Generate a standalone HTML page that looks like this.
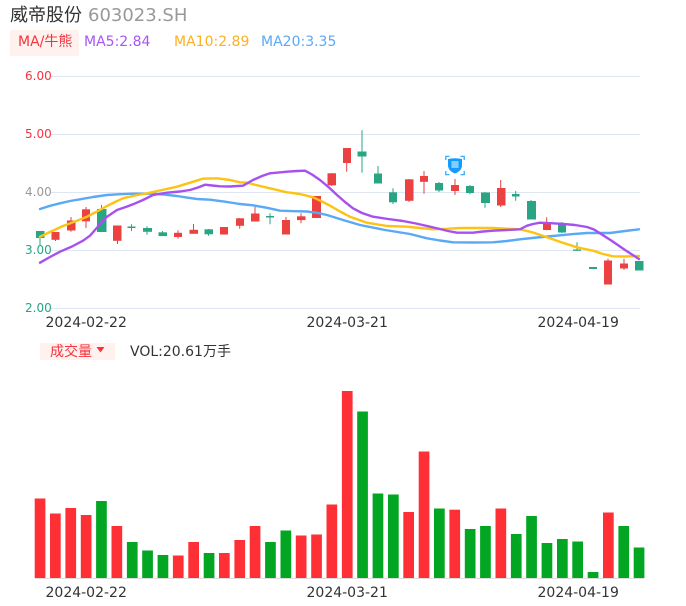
<!DOCTYPE html>
<html><head><meta charset="utf-8"><style>
html,body{margin:0;padding:0;background:#fff;width:686px;height:606px;overflow:hidden}
svg{position:absolute;left:0;top:0}
text{font-family:"DejaVu Sans","WenQuanYi Zen Hei",sans-serif}
</style></head><body>
<svg width="686" height="606" viewBox="0 0 686 606" xmlns="http://www.w3.org/2000/svg">
<text x="10" y="21" font-size="18" fill="#333">威帝股份</text>
<text x="88" y="21" font-size="18" fill="#999">603023.SH</text>
<rect x="10" y="30" width="69" height="26" fill="#fff2ee"/>
<text x="18" y="46" font-size="14" fill="#f5333f">MA/牛熊</text>
<text x="84" y="46" font-size="14" fill="#a855f7">MA5:2.84</text>
<text x="174" y="46" font-size="14" fill="#fdb022">MA10:2.89</text>
<text x="261" y="46" font-size="14" fill="#5aa9f8">MA20:3.35</text>

<g stroke="#e0e6f1" stroke-width="1">
<path d="M51 76.5H640M51 134.5H640M51 192.5H640M51 250.5H640M51 308.5H640"/>
</g>
<g font-size="12">
<text x="25" y="80" fill="#f5333f">6.00</text>
<text x="25" y="138" fill="#f5333f">5.00</text>
<text x="25" y="196" fill="#999">4.00</text>
<text x="25" y="254" fill="#26a485">3.00</text>
<text x="25" y="312" fill="#26a485">2.00</text>
</g>

<!-- green candles -->
<g fill="#2aa584" stroke="#2aa584" stroke-width="1">
<path d="M40 231V245M101.500 205V232M131.500 224.300V231M147 226.300V234.700M162.500 231V236M208.500 229V235.700M270 213.300V224.300M362 130.300V172.700M378 166V183M393 188.300V204M439 182V192M470 185V194.300M485 192V207.700M515.700 191V200.700M531 200V219.500M562 222V233M577 242.300V250.700"/>
<rect x="36.500" y="231.500" width="7.500" height="6" />
<rect x="97.500" y="209.500" width="8.500" height="22" />
<rect x="128" y="227" width="7" height="0.500" />
<rect x="143.500" y="228.500" width="8" height="2.800" />
<rect x="159" y="232.800" width="7.500" height="2.800" />
<rect x="205" y="229.800" width="7.500" height="4" />
<rect x="266.500" y="216.500" width="7" height="0.500" />
<rect x="358" y="152" width="8" height="4" />
<rect x="374.500" y="174" width="7" height="9" />
<rect x="389.500" y="192.800" width="7" height="9" />
<rect x="435.500" y="183.500" width="7" height="6.500" />
<rect x="466.500" y="186.500" width="7" height="6" />
<rect x="481.500" y="193" width="8" height="9.500" />
<rect x="512.500" y="194.500" width="6.500" height="1.500" />
<rect x="527.500" y="201.500" width="8" height="17.500" />
<rect x="558.500" y="224" width="7" height="8" />
<rect x="573.500" y="250" width="7" height="0.300" />
<rect x="589.500" y="267.500" width="7" height="1" />
<rect x="635.500" y="261.500" width="7.500" height="8.500" />
</g>
<!-- red candles -->
<g fill="#eb4141" stroke="#eb4141" stroke-width="1">
<path d="M55.500 232V241M71 217V231.700M86 207V228M117.500 226V244M178 230.300V238.700M193.500 224V233.300M224 227V234.700M239.700 218V228.700M255 206.700V221M286 217V234M301 213.300V223.300M331.700 173V186M346.700 148V171.700M409 179V202M424 171V193.700M455 179V195M500.700 180V207M546.700 217.300V230.300M608 258.700V284M624 258.700V270"/>
<rect x="52" y="232.500" width="7" height="6.800" />
<rect x="67.500" y="221" width="7.500" height="9" />
<rect x="82.500" y="209.800" width="7" height="11" />
<rect x="113.500" y="226" width="7.500" height="14.300" />
<rect x="174.500" y="233.300" width="7" height="3.200" />
<rect x="190" y="230.300" width="7.500" height="3" />
<rect x="220.500" y="227.500" width="7" height="6.500" />
<rect x="236.500" y="218.800" width="7" height="6.500" />
<rect x="251.500" y="214" width="7.500" height="7" />
<rect x="282.500" y="220.500" width="7" height="13.500" />
<rect x="297.500" y="216.800" width="7.500" height="2.800" />
<rect x="312.500" y="196.500" width="8" height="21" />
<rect x="328" y="173.800" width="7.500" height="11" />
<rect x="343.500" y="148.500" width="7" height="14" />
<rect x="405.500" y="179.800" width="7.500" height="20.500" />
<rect x="420.500" y="176.500" width="7" height="4.800" />
<rect x="451.500" y="185.500" width="7" height="5" />
<rect x="497.500" y="188.500" width="7.500" height="16.500" />
<rect x="543.500" y="224.500" width="7" height="5" />
<rect x="604.500" y="261" width="7" height="23" />
<rect x="620.500" y="264" width="7" height="4" />
</g>

<!-- MA lines -->
<g fill="none" stroke-width="2.400" stroke-linejoin="round" stroke-linecap="round">
<polyline stroke="#5aa9f5" points="40,209 50,205.800 60,203.300 70,201 80,199.300 93,197 107,195 120,194.200 133,193.700 153,193.700 165,194.700 177,196 187,197.600 197,199 210,199.700 225,201.700 240,204 253,205.300 267,207.800 280,210.700 295,211.200 307,211.500 317,212.800 327,215 343,220 360,225 385,230 410,234 427,238.300 440,240.500 453,242.300 473,242.500 493,242.300 507,241 520,239.300 537,237.500 553,236 570,234.300 587,233 610,233 625,231 639,229.300"/>
<polyline stroke="#fdc313" points="40,236.700 51,231.500 63,226 75,221.500 87,216.700 97,211.500 107,206 115,202 123,198.300 135,195.500 147,193.300 162,190 177,186.700 190,182.700 203,178.700 217,178.300 230,180 240,182.300 247,182.700 258,185.500 270,188.300 287,192.300 300,194 313,197.300 321,201 330,205.700 340,211.500 350,216.700 367,222.700 387,226 407,226.700 420,228 433,229.300 447,228.800 460,228 493,228 520,229.300 533,232.500 547,237.300 562,242.500 577,247.300 593,250.700 603,254 613,256.300 625,256.500 639,256"/>
<polyline stroke="#a750f0" points="40,262.700 50,257 60,251.700 72,246.500 83,240.700 90,235.700 95,230 101,223 107,216.700 117,210 125,207.300 133,204.300 143,200 153,195 167,192.700 180,191.500 190,190 198,187.500 205,184.700 212,185.500 220,186.300 230,186.500 243,185.700 253,180 262,176 270,173.300 287,171.700 297,171 305,170.700 312,174.500 320,180 329,187.500 337,195 345,202 353,208.300 362,213 373,216.700 388,219 403,221 416,223.500 430,226.700 440,229 448,231 457,232.700 473,232.700 483,231.500 493,230.700 507,230 520,229.300 527,225.700 533,224 540,222.700 560,223.700 575,225 587,227 594,229.500 600,233.300 612,241 625,250 639,259"/>
</g>

<!-- marker icon -->
<g>
<path d="M445.800 160V156.300H449.500M460.500 156.300H464.200V160M445.800 171V174.700H449.500M460.500 174.700H464.200V171" fill="none" stroke="#1ea7fd" stroke-width="1.200"/>
<path d="M448 159Q455 157.500 462 159V165Q462 171 455 173.500Q448 171 448 165Z" fill="#149bfb"/>
<rect x="451.500" y="161" width="7" height="7" fill="#7fd0ff"/>
</g>

<text x="45.500" y="327" font-size="14" fill="#333">2024-02-22</text>
<text x="306.500" y="327" font-size="14" fill="#333">2024-03-21</text>
<text x="537.500" y="327" font-size="14" fill="#333">2024-04-19</text>

<rect x="40" y="343" width="75" height="17" fill="#fff2ee"/>
<text x="50" y="356" font-size="14" fill="#f5333f">成交量</text>
<path d="M96.500 347H104.500L100.500 352.500Z" fill="#f5333f"/>
<text x="130" y="356" font-size="14" fill="#333">VOL:20.61万手</text>

<path d="M35 578.500H644" stroke="#ddd" stroke-width="1"/>
<!-- volume bars red -->
<g fill="#ff3035">
<rect x="34.700" y="498.500" width="10.700" height="79.500"/>
<rect x="50" y="513.500" width="10.700" height="64.500"/>
<rect x="65.400" y="508" width="10.700" height="70"/>
<rect x="80.800" y="515" width="10.700" height="63"/>
<rect x="111.500" y="526" width="10.700" height="52"/>
<rect x="172.900" y="555.500" width="10.700" height="22.500"/>
<rect x="188.300" y="542" width="10.700" height="36"/>
<rect x="219" y="553" width="10.700" height="25"/>
<rect x="234.400" y="540" width="10.700" height="38"/>
<rect x="249.700" y="526" width="10.700" height="52"/>
<rect x="295.800" y="535.500" width="10.700" height="42.500"/>
<rect x="311.200" y="534.500" width="10.700" height="43.500"/>
<rect x="326.500" y="504.500" width="10.700" height="73.500"/>
<rect x="341.900" y="391" width="10.700" height="187"/>
<rect x="403.300" y="512" width="10.700" height="66"/>
<rect x="418.700" y="451.500" width="10.700" height="126.500"/>
<rect x="449.400" y="509.700" width="10.700" height="68.300"/>
<rect x="495.500" y="508.500" width="10.700" height="69.500"/>
<rect x="603" y="512.500" width="10.700" height="65.500"/>
</g>
<g fill="#02a622">
<rect x="96.100" y="501" width="10.700" height="77"/>
<rect x="126.900" y="542" width="10.700" height="36"/>
<rect x="142.200" y="550.500" width="10.700" height="27.500"/>
<rect x="157.600" y="555" width="10.700" height="23"/>
<rect x="203.700" y="553" width="10.700" height="25"/>
<rect x="265.100" y="542" width="10.700" height="36"/>
<rect x="280.500" y="530.500" width="10.700" height="47.500"/>
<rect x="357.200" y="411.500" width="10.700" height="166.500"/>
<rect x="372.600" y="493.500" width="10.700" height="84.500"/>
<rect x="388" y="494.500" width="10.700" height="83.500"/>
<rect x="434" y="508.500" width="10.700" height="69.500"/>
<rect x="464.800" y="529" width="10.700" height="49"/>
<rect x="480.100" y="526" width="10.700" height="52"/>
<rect x="510.900" y="534" width="10.700" height="44"/>
<rect x="526.200" y="516" width="10.700" height="62"/>
<rect x="541.600" y="543" width="10.700" height="35"/>
<rect x="557" y="539" width="10.700" height="39"/>
<rect x="572.300" y="541.500" width="10.700" height="36.500"/>
<rect x="587.700" y="572" width="10.700" height="6"/>
<rect x="618.400" y="526" width="10.700" height="52"/>
<rect x="633.700" y="547.500" width="10.700" height="30.500"/>
</g>

<text x="45.500" y="597" font-size="14" fill="#333">2024-02-22</text>
<text x="306.500" y="597" font-size="14" fill="#333">2024-03-21</text>
<text x="537.500" y="597" font-size="14" fill="#333">2024-04-19</text>
</svg>
</body></html>
